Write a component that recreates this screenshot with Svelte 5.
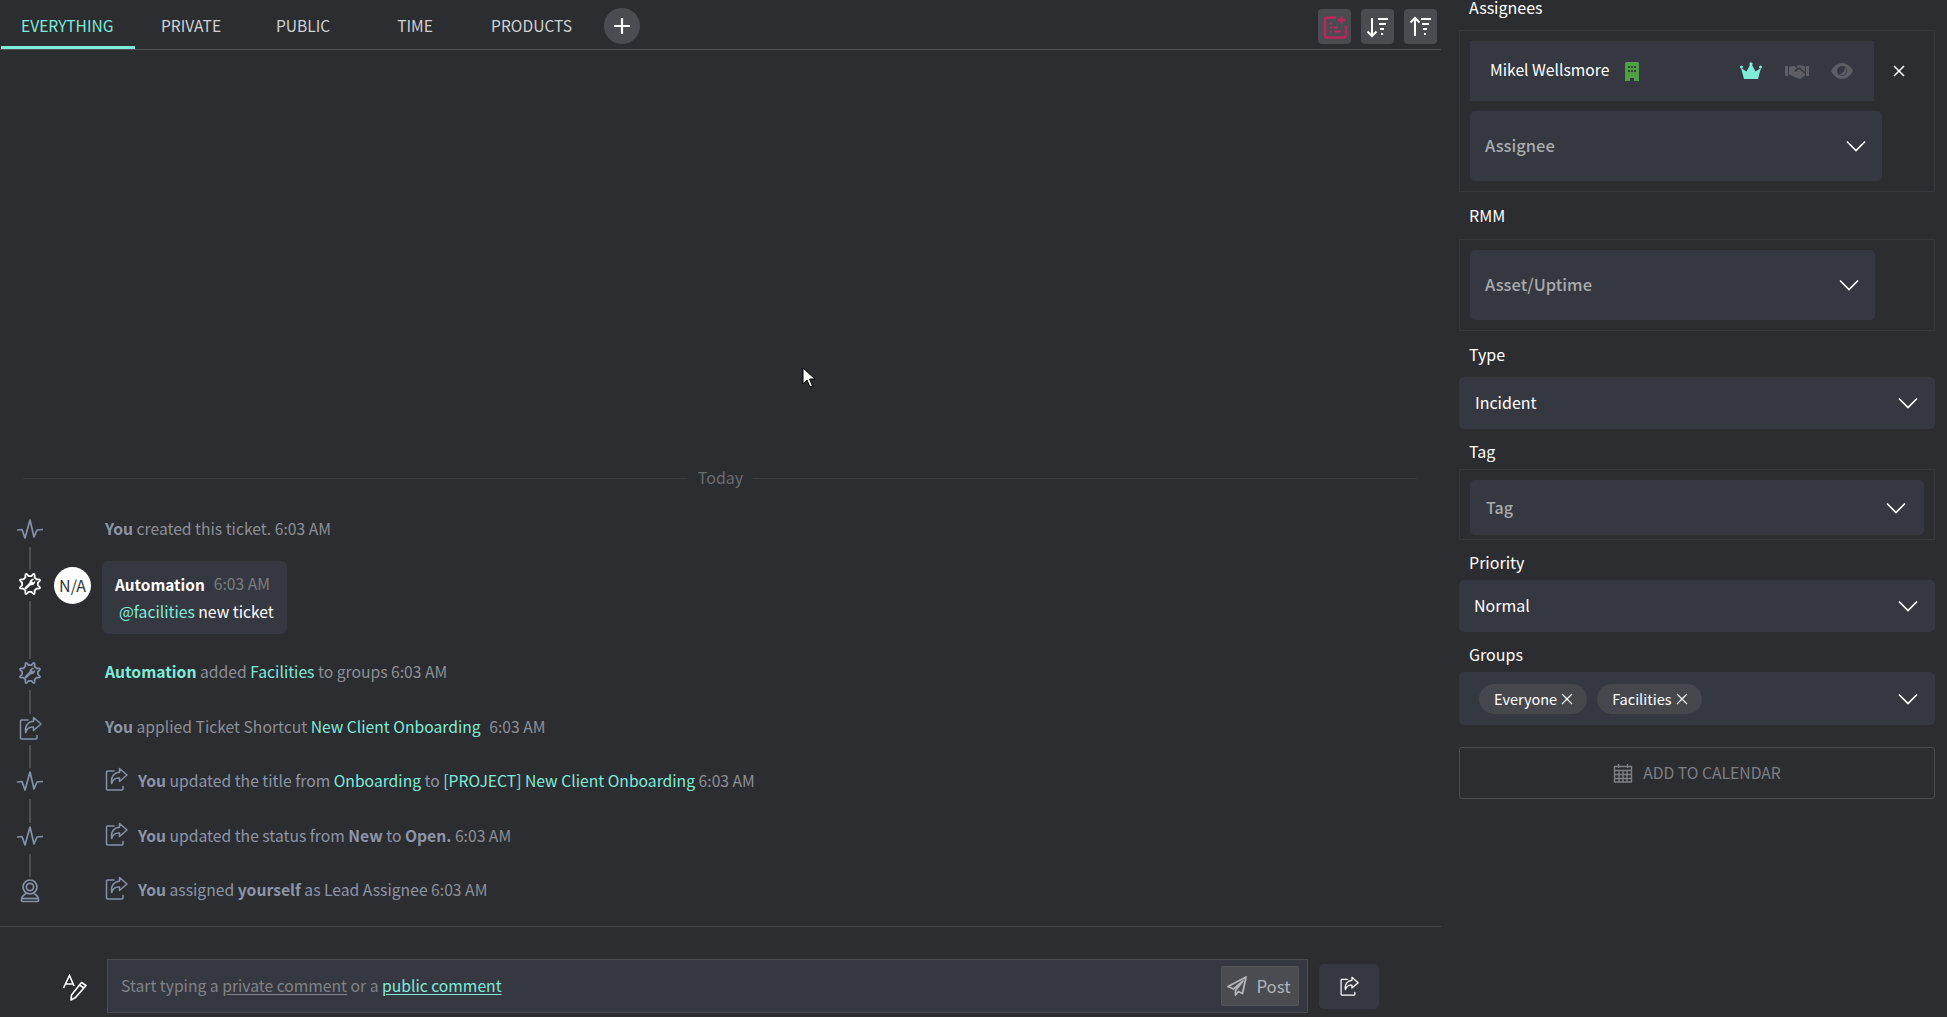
<script>
  const tabs = ['EVERYTHING', 'PRIVATE', 'PUBLIC', 'TIME', 'PRODUCTS'];

  // scalloped outline of the automation gear
  function gearPath() {
    const pts = [];
    const lobes = 8;
    for (let i = 0; i < lobes; i++) {
      const a = (i / lobes) * Math.PI * 2 - Math.PI / 2 + Math.PI / 8;
      const step = Math.PI / lobes;
      const p = (r, t) => `${(12 + r * Math.cos(t)).toFixed(2)} ${(12 + r * Math.sin(t)).toFixed(2)}`;
      pts.push(`${i === 0 ? 'M' : 'L'}${p(8, a - step * 0.55)}`);
      pts.push(`Q${p(13.800, a)} ${p(8, a + step * 0.55)}`);
    }
    return pts.join(' ') + 'Z';
  }
  const gearD = gearPath();
</script>

{#snippet chevron()}
  <svg class="chev" viewBox="0 0 20 12" width="20" height="12"><path d="M1 1.500 10 10.500 19 1.500" fill="none" stroke="currentColor" stroke-width="1.600"/></svg>
{/snippet}

{#snippet pulse()}
  <svg viewBox="0 0 26 20" width="26" height="20" class="pulse"><path d="M0.500 11 5 10.500 8 19 13 1 17 18 20 11 25.500 10.500" fill="none" stroke="currentColor" stroke-width="1.700" stroke-linejoin="round" stroke-linecap="round"/></svg>
{/snippet}

{#snippet gear()}
  <svg viewBox="0 0 24 24" width="24" height="24"><path d={gearD} fill="none" stroke="currentColor" stroke-width="1.800" stroke-linejoin="round"/><path d="M7.800 16.200 12 12" stroke="currentColor" stroke-width="2.600" stroke-linecap="round"/><path d="M16.400 7a3.800 3.800 0 0 0-4.800 4.800l1.200 1.400a3.800 3.800 0 0 0 4.400-4.600l-2 1.800-1.400-1.400z" fill="currentColor"/></svg>
{/snippet}

{#snippet share(w = 24, h = 24)}
  <svg viewBox="0 0 24 24" width={w} height={h}><path d="M10 4H3.500a1 1 0 0 0-1 1v17a1 1 0 0 0 1 1H18a1 1 0 0 0 1-1v-2.500" fill="none" stroke="currentColor" stroke-width="1.500" stroke-linecap="round"/><path d="M15.500 1.500 23 8l-7.500 6.500V11c-4-.4-6.500 1-7.800 5.500C6.500 10 10 5.500 15.500 5.200z" fill="none" stroke="currentColor" stroke-width="1.500" stroke-linejoin="round"/></svg>
{/snippet}

{#snippet person()}
  <svg viewBox="0 0 24 24" width="24" height="24"><circle cx="12" cy="8" r="7" fill="none" stroke="currentColor" stroke-width="1.700"/><circle cx="12" cy="8" r="3.600" fill="none" stroke="currentColor" stroke-width="1.700"/><path d="M8 14.500C5 16 3.500 18 3.500 21.500a1 1 0 0 0 1 1h15a1 1 0 0 0 1-1c0-3.500-1.500-5.500-4.500-7" fill="none" stroke="currentColor" stroke-width="1.700"/><path d="M3.500 19.500h17" stroke="currentColor" stroke-width="1.700"/></svg>
{/snippet}

<div class="page">
  <main class="left">
    <nav class="tabs">
      {#each tabs as t, i}
        <span class="tab" class:active={i === 0}>{t}</span>
      {/each}
      <span class="add"><svg viewBox="0 0 18 18" width="18" height="18"><path d="M9 1v16M1 9h16" stroke="#fff" stroke-width="2.200"/></svg></span>
      <div class="tools">
        <span class="tool">
          <svg viewBox="0 0 24 24" width="24" height="24"><path d="M13 2.500H4A2 2 0 0 0 2 4.500v16a2 2 0 0 0 2 2h17a2 2 0 0 0 2-2V11" fill="none" stroke="#b9285a" stroke-width="2.500"/><path d="M18.500 0l1.500 3.500L23.500 5 20 6.500 18.500 10 17 6.500 13.500 5 17 3.500z" fill="#b9285a"/><path d="M6.500 8.500h2.500M6.500 12.500h2.500M6.500 16.500h2.500M11 12.500h4M11 16.500h7" stroke="#b9285a" stroke-width="2.200"/></svg>
        </span>
        <span class="tool">
          <svg viewBox="0 0 24 24" width="24" height="24"><path d="M6 3v18M1.500 16.500 6 21l4.500-4.500" fill="none" stroke="#fff" stroke-width="2"/><path d="M12 4h10M13 9h7M14 14h4M15 19h2" stroke="#fff" stroke-width="2"/></svg>
        </span>
        <span class="tool">
          <svg viewBox="0 0 24 24" width="24" height="24"><path d="M6 21V3M1.500 7.500 6 3l4.500 4.500" fill="none" stroke="#fff" stroke-width="2"/><path d="M12 4h10M13 9h7M14 14h4M15 19h2" stroke="#fff" stroke-width="2"/></svg>
        </span>
      </div>
    </nav>

    <section class="feed">
      <div class="today"><span>Today</span></div>

      <div class="row">
        <div class="rail"><span class="ic">{@render pulse()}</span><i></i></div>
        <p class="msg"><b>You</b> created this ticket. 6:03 AM</p>
      </div>

      <div class="row tall">
        <div class="rail"><span class="ic white">{@render gear()}</span><i></i></div>
        <div class="avatar">N/A</div>
        <div class="bubble">
          <div class="head"><b>Automation</b><span>6:03 AM</span></div>
          <div class="body"><em>@facilities</em> new ticket</div>
        </div>
      </div>

      <div class="row">
        <div class="rail"><span class="ic">{@render gear()}</span><i></i></div>
        <p class="msg"><b class="teal">Automation</b> added <em>Facilities</em> to groups 6:03 AM</p>
      </div>

      <div class="row">
        <div class="rail"><span class="ic">{@render share(26, 24)}</span><i></i></div>
        <p class="msg"><b>You</b> applied Ticket Shortcut <em>New Client Onboarding</em> <span class="wide">6:03 AM</span></p>
      </div>

      <div class="row">
        <div class="rail"><span class="ic">{@render pulse()}</span><i></i></div>
        <span class="inner">{@render share()}</span>
        <p class="msg blue"><b>You</b> updated the title from <em>Onboarding</em> to <em>[PROJECT] New Client Onboarding</em> <span class="time">6:03 AM</span></p>
      </div>

      <div class="row">
        <div class="rail"><span class="ic">{@render pulse()}</span><i></i></div>
        <span class="inner">{@render share()}</span>
        <p class="msg blue"><b>You</b> updated the status from <b>New</b> to <b>Open.</b> <span class="time">6:03 AM</span></p>
      </div>

      <div class="row last">
        <div class="rail"><span class="ic">{@render person()}</span></div>
        <span class="inner">{@render share()}</span>
        <p class="msg blue"><b>You</b> assigned <b>yourself</b> as Lead Assignee <span class="time">6:03 AM</span></p>
      </div>
    </section>

    <footer class="composer">
      <span class="pen">
        <svg viewBox="0 0 26 28" width="26" height="28"><path d="M1.500 14 7.500 1.500 12 12M3.500 10h7" fill="none" stroke="#fff" stroke-width="1.600"/><path d="M19.500 8.500l4.500 3-10.500 12-4.500 2.500.5-5zM17.500 11l4.500 3" fill="none" stroke="#fff" stroke-width="1.600" stroke-linejoin="round"/></svg>
      </span>
      <div class="input">
        <span class="ph">Start typing a <u>private comment</u> or a <u class="pub">public comment</u></span>
        <span class="post">
          <svg viewBox="0 0 20 20" width="20" height="20"><path d="M19 1 1 10.500l5.500 2.500L16 5l-7.500 9.500V19l3-3.500 4 2z" fill="none" stroke="currentColor" stroke-width="1.800" stroke-linejoin="round"/></svg>
          Post
        </span>
      </div>
      <span class="sidebtn">{@render share(20, 20)}</span>
    </footer>
  </main>

  <aside class="right">
    <div class="label first">Assignees</div>
    <div class="box b1">
      <div class="assignee">
        <span class="name">Mikel Wellsmore</span>
        <svg class="bld" viewBox="0 0 14 19" width="14" height="19"><path d="M0 1.500A1.500 1.500 0 0 1 1.500 0h11A1.500 1.500 0 0 1 14 1.500V19H9v-3H5v3H0z" fill="#4e9f45"/><path d="M3 4h2v2H3zM6 4h2v2H6zM9 4h2v2H9zM3 8h2v2H3zM6 8h2v2H6zM9 8h2v2H9z" fill="#2c4a2e"/></svg>
        <svg class="crown" viewBox="0 0 22 18" width="22" height="18"><path d="M4 17h14l3-11-5.500 3.500L11 1 6.500 9.500 1 6z" fill="#7eecd9"/><circle cx="11" cy="1.800" r="1.600" fill="#7eecd9"/><circle cx="1.500" cy="5" r="1.500" fill="#7eecd9"/><circle cx="20.500" cy="5" r="1.500" fill="#7eecd9"/></svg>
        <svg class="hands" viewBox="0 0 24 16" width="24" height="16"><path d="M0 3h3v10H0zM21 3h3v10h-3zM4 3.500 9 3l3 2-3 3 1.500 1L14 6l6 5v1.500l-5 3.500-3-1-8-3.500zM12 2.500 15 2l5 1.500V9l-5-4.500-3 .5z" fill="#5c5e63"/></svg>
        <svg class="eye" viewBox="0 0 22 16" width="22" height="16"><path d="M11 0c5 0 9 4 11 8-2 4-6 8-11 8S2 12 0 8c2-4 6-8 11-8z" fill="#5c5e63"/><circle cx="11" cy="8" r="5" fill="#363841"/><path d="M14 4.500A4 4 0 1 1 8 11c2 .5 5-1 6-6.500z" fill="#5c5e63"/></svg>
      </div>
      <svg class="close" viewBox="0 0 12 12" width="12" height="12"><path d="M1 1l10 10M11 1 1 11" stroke="#fff" stroke-width="1.500"/></svg>
      <div class="select ph-sel big w-a"><span>Assignee</span>{@render chevron()}</div>
    </div>

    <div class="label rmm">RMM</div>
    <div class="box b2">
      <div class="select ph-sel big w-r"><span>Asset/Uptime</span>{@render chevron()}</div>
    </div>

    <div class="label type">Type</div>
    <div class="select val incident"><span>Incident</span>{@render chevron()}</div>

    <div class="label tag">Tag</div>
    <div class="box b3">
      <div class="select ph-sel tagsel"><span>Tag</span>{@render chevron()}</div>
    </div>

    <div class="label tag">Priority</div>
    <div class="select val normal"><span>Normal</span>{@render chevron()}</div>

    <div class="label tag">Groups</div>
    <div class="select groups">
      <div class="chips">
        <span class="chip">Everyone <svg viewBox="0 0 12 12" width="12" height="12"><path d="M1 1l10 10M11 1 1 11" stroke="#fff" stroke-width="1.200"/></svg></span>
        <span class="chip">Facilities <svg viewBox="0 0 12 12" width="12" height="12"><path d="M1 1l10 10M11 1 1 11" stroke="#fff" stroke-width="1.200"/></svg></span>
      </div>
      {@render chevron()}
    </div>

    <div class="calendar">
      <svg viewBox="0 0 20 20" width="20" height="20"><path d="M1.500 3.500h17v15.500h-17zM1.500 7.500h17M1.500 11.500h17M1.500 15.500h17M6 7.500V19M10 7.500V19M14 7.500V19M5.500 1v4M14.500 1v4" fill="none" stroke="currentColor" stroke-width="1.400"/></svg>
      ADD TO CALENDAR
    </div>
  </aside>

  <svg class="cursor" viewBox="0 0 14 22" width="14" height="22"><path d="M1 1v16l4-4 3 7 2.500-1-3-7h5.500z" fill="#fff" stroke="#000" stroke-width="1"/></svg>
</div>

<style>
  :global(body) { margin: 0; background: #2c2d31; }
  .page { position: relative; display: flex; width: 1947px; height: 1017px; overflow: hidden; background: #2c2d31; color: #fff; font: 15.700px/24px "Noto Sans CJK SC", "Noto Sans", sans-serif; }
  .left { width: 1441px; height: 1017px; display: flex; flex-direction: column; flex: none; }

  .tabs { display: flex; align-items: stretch; height: 49px; border-bottom: 1px solid #505155; flex: none; box-sizing: content-box; }
  .tab { min-width: 112px; padding: 0 20px; box-sizing: border-box; text-align: center; color: #d0d1d3; font-size: 15.600px; line-height: 51px; white-space: nowrap; }
  .tab.active { margin-left: 1px; padding-right: 21.500px; color: #7eecd9; border-bottom: 3px solid #7eecd9; height: 49px; }
  .add { width: 36px; height: 36px; border-radius: 50%; background: #4a4c51; margin: 8px 0 0 12px; display: flex; align-items: center; justify-content: center; }
  .tools { margin-left: auto; margin-right: 4px; display: flex; gap: 10px; padding-top: 9px; }
  .tool { width: 33px; height: 35px; background: #4a4c51; border-radius: 4px; display: flex; align-items: center; justify-content: center; }

  .feed { flex: 1; display: flex; flex-direction: column; justify-content: flex-end; padding-bottom: 12px; border-bottom: 1px solid #45464a; }
  .today { display: flex; align-items: center; gap: 10px; margin: 0 24px 27px 23px; height: 24px; color: #6a6c70; font-size: 16px; justify-content: center; }
  .today span { line-height: 20px; margin: -3px 0 0 1px; }
  .today::before, .today::after { content: ""; flex: 1; height: 1px; background: #3c3d42; }

  .row { display: flex; align-items: flex-start; height: 54.500px; }
  .row.tall { height: 89px; }
  .row.last { height: 35px; }
  .rail { width: 48px; padding-left: 6px; height: 100%; display: flex; flex-direction: column; align-items: center; flex: none; }
  .ic { height: 24px; display: flex; align-items: center; color: #8591a8; flex: none; }
  .ic.white { color: #fff; }
  .pulse { margin-top: -2px; }
  .rail i { width: 2px; flex: 1; background: #4d4e53; margin: 5px 0 2px; }
  .msg { margin: 0 0 0 51px; color: #8c8f96; line-height: 22px; white-space: nowrap; }
  .msg.blue { margin-left: 10px; color: #8c95a8; }
  .msg b { font-weight: 700; color: #8c95a8; }
  .msg b.teal { color: #7eecd9; }
  .msg em, .body em { font-style: normal; color: #7eecd9; }
  .wide { margin-left: 5px; }
  .time { color: #8c8f96; }
  .inner { margin-left: 50px; color: #8591a8; height: 24px; margin-top: -3px; }

  .avatar { width: 37px; height: 37px; margin-top: -5px; border-radius: 50%; background: #fff; color: #33353a; text-align: center; font-size: 16px; line-height: 36px; flex: none; }
  .bubble { margin: -11px 0 0 11px; width: 185px; height: 73px; box-sizing: border-box; padding: 11px 13px; background: #363841; border-radius: 6px; white-space: nowrap; }
  .head { display: flex; gap: 9px; line-height: 24px; }
  .head b { font-weight: 700; color: #fff; font-size: 15.400px; }
  .head span { color: #7a7c80; }
  .body { padding: 4px 0 0 4px; color: #fff; }

  .composer { height: 90px; box-sizing: border-box; display: flex; align-items: center; padding: 32px 0 4px 62px; flex: none; }
  .pen { width: 24px; margin-right: 21px; height: 28px; margin-top: 4px; }
  .input { width: 1201px; height: 54px; box-sizing: border-box; background: #363841; border: 1px solid #4a4b50; display: flex; align-items: center; justify-content: space-between; padding: 0 8px 0 13px; }
  .ph { color: #818388; }
  .ph u { text-underline-offset: 2px; }
  .ph u.pub { color: #7eecd9; }
  .post { width: 78px; height: 40px; box-sizing: border-box; background: #4a4c51; border: 1px solid #55575c; border-radius: 2px; color: #b3b4b7; display: flex; align-items: center; justify-content: center; gap: 9px; font-size: 16.800px; padding-right: 2px; }
  .sidebtn { margin-left: 11px; width: 60px; height: 45px; background: #363841; border-radius: 5px; display: flex; align-items: center; justify-content: center; color: #fff; }

  .right { width: 476px; margin-left: 18px; flex: none; }
  .label { padding-left: 10px; height: 24px; line-height: 22px; margin-top: 11px; font-size: 16px; color: #fff; }
  .label.first { height: 16px; line-height: 14px; margin-top: 0; }
  .label.rmm { margin-top: 12px; }
  .label.type { margin-top: 12px; }
  .box { position: relative; border: 1px solid #37383d; box-sizing: border-box; padding: 10px; }
  .b1 { margin-top: 14px; height: 162px; }
  .b2 { margin-top: 11px; height: 92px; }
  .b3 { margin-top: 5px; height: 71px; }
  .assignee { width: 404px; height: 60px; background: #363841; display: flex; align-items: center; padding: 0 21px 0 20px; box-sizing: border-box; margin-bottom: 10px; }
  .name { font-size: 15.700px; white-space: nowrap; line-height: 22px; padding-bottom: 2px; }
  .bld { margin-left: 16px; }
  .crown { margin-left: auto; }
  .hands { margin-left: 23px; }
  .eye { margin-left: 22px; }
  .close { position: absolute; top: 34px; right: 29px; }

  .select { display: flex; align-items: center; justify-content: space-between; background: #363841; border-radius: 5px; box-sizing: border-box; color: #fff; }
  .chev { color: #fff; flex: none; }
  .ph-sel span { color: #a9aaad; font-weight: 500; padding-bottom: 2px; }
  .big { height: 70px; padding: 0 16px 0 15px; font-size: 16.500px; }
  .w-a { width: 412px; }
  .w-r { width: 405px; }
  .tagsel { height: 55px; width: 454px; padding: 0 18px 0 16px; font-size: 16px; }
  .val { height: 52px; padding: 0 17px 2px 16px; margin-top: 10px; font-size: 16px; }
  .val .chev { margin-top: 2px; }
  .normal { margin-top: 5px; padding-left: 15px; }
  .groups { height: 53px; margin-top: 5px; padding: 0 17px 0 20px; }
  .chips { display: flex; gap: 10px; }
  .chip { height: 30px; padding: 0 14px 0 15px; border-radius: 15px; background: #45474c; display: flex; align-items: center; gap: 4px; font-size: 14.500px; line-height: 26px; }
  .calendar { margin-top: 22px; height: 52px; box-sizing: border-box; border: 1px solid #4a4b50; border-radius: 3px; color: #7d7f84; display: flex; align-items: center; justify-content: center; gap: 10px; }
  .cursor { position: absolute; left: 802px; top: 367px; }
</style>
